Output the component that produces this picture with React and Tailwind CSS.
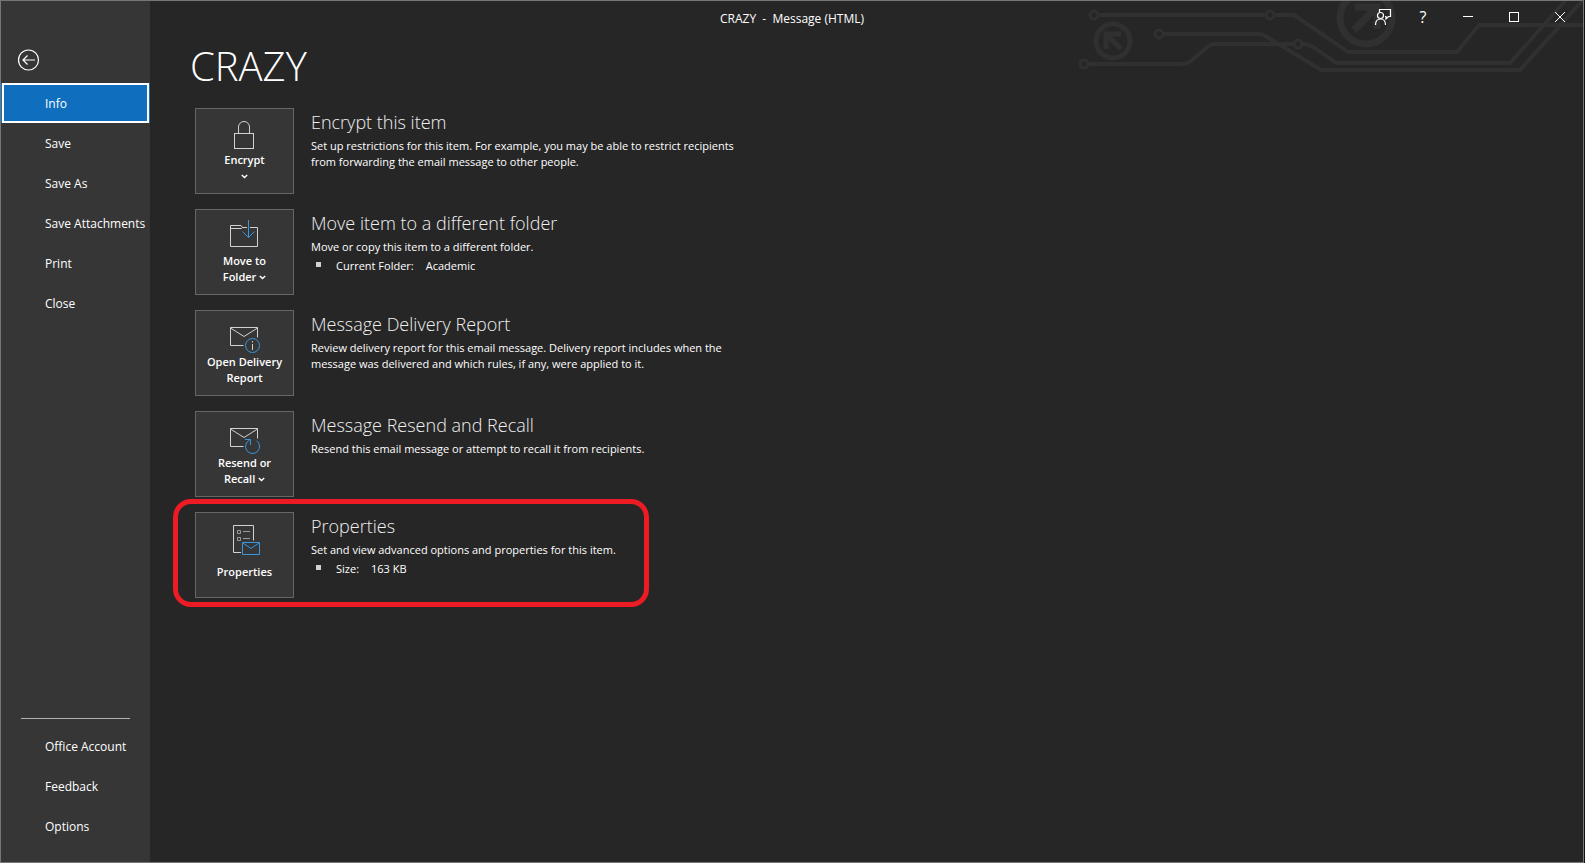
import React from 'react';

const primaryNav = ['Info', 'Save', 'Save As', 'Save Attachments', 'Print', 'Close'];
const secondaryNav = ['Office Account', 'Feedback', 'Options'];

const ActionIcon = ({ children }) => (
  <svg className="overflow-visible" width="31" height="34" viewBox="0 0 31 34" fill="none" stroke="#d2d2d2">
    {children}
  </svg>
);

const LockIcon = () => (
  <ActionIcon>
    <rect x="5.5" y="15.5" width="19" height="15" />
    <path d="M9.500 15V9a5.500 5.500 0 0 1 11 0V15" />
  </ActionIcon>
);

const FolderIcon = () => (
  <ActionIcon>
    <path d="M18 8.500H13.500L12 6.500H1.500V27.500H28.500V8.500H21M1.500 9.500H12.500L13.500 8.500" />
    <path d="M19.500 1v17.500M13.500 12.500l6 6 6-6" stroke="#3a96dd" />
  </ActionIcon>
);

const Envelope = () => (
  <path d="M14.500 25.500h-13v-18h27v10M1.500 8l13.500 8.500L28.500 8" />
);

const ReportIcon = () => (
  <ActionIcon>
    <Envelope />
    <circle cx="23.5" cy="25.5" r="7" stroke="#3a96dd" />
    <path d="M23.500 21v1.500M23.500 24v6" />
  </ActionIcon>
);

const RecallIcon = () => (
  <ActionIcon>
    <Envelope />
    <path d="M27.500 19.700a7 7 0 1 1-7-.5M16 18.500h5.500v5.500" stroke="#3a96dd" />
  </ActionIcon>
);

const PropertiesIcon = () => (
  <ActionIcon>
    <path d="M12 30.500H4.500v-27h20v15" />
    <path d="M8.500 8.500h3v3h-3zM8.500 15.500h3v3h-3zM14 9.500h7M14 16.500h7" stroke="#9a9a9a" />
    <path d="M13.500 20.500h17v12h-17zM14 21l8 5.500 8-5.500" stroke="#3a96dd" />
  </ActionIcon>
);

const Chevron = () => (
  <svg className="inline-block mb-0.5" width="7" height="5" viewBox="0 0 7 5" fill="none" stroke="#fff" strokeWidth="1.5">
    <path d="M.8 1l2.700 2.500L6.200 1" />
  </svg>
);

const actions = [
  {
    icon: <LockIcon />,
    label: <>Encrypt<br /><Chevron /></>,
    title: 'Encrypt this item',
    text: ['Set up restrictions for this item. For example, you may be able to restrict recipients', 'from forwarding the email message to other people.'],
  },
  {
    icon: <FolderIcon />,
    label: <>Move to<br />Folder <Chevron /></>,
    title: 'Move item to a different folder',
    text: ['Move or copy this item to a different folder.'],
    detail: ['Current Folder:', 'Academic'],
  },
  {
    icon: <ReportIcon />,
    label: <>Open Delivery<br />Report</>,
    title: 'Message Delivery Report',
    text: ['Review delivery report for this email message. Delivery report includes when the', 'message was delivered and which rules, if any, were applied to it.'],
  },
  {
    icon: <RecallIcon />,
    label: <>Resend or<br />Recall <Chevron /></>,
    title: 'Message Resend and Recall',
    text: ['Resend this email message or attempt to recall it from recipients.'],
  },
  {
    icon: <PropertiesIcon />,
    label: 'Properties',
    title: 'Properties',
    text: ['Set and view advanced options and properties for this item.'],
    detail: ['Size:', '163 KB'],
    highlighted: true,
  },
];

const CircuitArt = () => (
  <svg className="absolute top-0 right-0" width="521" height="80" viewBox="0 1 521 80" fill="none" stroke="#303030" strokeWidth="4">
    <circle cx="32" cy="15" r="4" strokeWidth="3" />
    <circle cx="208" cy="15" r="4" strokeWidth="3" />
    <circle cx="97" cy="34" r="4" strokeWidth="3" />
    <circle cx="22" cy="64" r="4" strokeWidth="3" />
    <circle cx="236" cy="44" r="4" strokeWidth="3" />
    <path d="M36 15h168M212 15h20l54 37h109l22-27h104" />
    <path d="M101 34h96q4 0 8 3l54 33h199l63-70" />
    <path d="M26 64h95q4 0 8-3l16-14q4-3 8-3h79M240 44q8 0 14 5l20 14h174l56-63" />
    <circle cx="51" cy="41" r="17" strokeWidth="5" />
    <path d="M59 34H44v15M45 35l14 14" strokeWidth="5" />
    <circle cx="304" cy="18" r="26" strokeWidth="7" />
    <path d="M293 7h22v22M314 8l-22 22" strokeWidth="7" />
  </svg>
);

const WindowControls = () => (
  <div className="flex items-center self-start justify-self-end">
    <button aria-label="Coming soon" className="flex w-11 h-8 items-center justify-center">
      <svg width="18" height="18" viewBox="0 0 18 18" fill="none" stroke="#fff" strokeWidth="1.2">
        <path d="M5.500 4V1.500h11v7h-2l-2.500 2.500v-2.500h-1" />
        <circle cx="6.500" cy="7.500" r="3" />
        <path d="M1.500 17c0-4 2-6 5-6s5 2 5 6" />
      </svg>
    </button>
    <button aria-label="Help" className="w-9 h-8 text-base leading-8">?</button>
    <button aria-label="Minimize" className="flex w-[46px] h-8 ml-1 items-center justify-center">
      <svg width="10" height="10" stroke="#fff"><path d="M0 4.500h10" /></svg>
    </button>
    <button aria-label="Maximize" className="flex w-[46px] h-8 items-center justify-center">
      <svg width="10" height="10" fill="none" stroke="#fff"><rect x=".5" y=".5" width="9" height="9" /></svg>
    </button>
    <button aria-label="Close" className="flex w-[46px] h-8 items-center justify-center">
      <svg width="10" height="10" stroke="#fff"><path d="M0 0l10 10M10 0L0 10" /></svg>
    </button>
  </div>
);

const NavItem = ({ label, active }) => (
  <a
    href="#"
    className={`flex items-center h-10 mx-px pt-0.5 pl-[41px] border-2 whitespace-nowrap ${
      active ? 'bg-[#106ebe] border-white shadow-[-1px_0_#106ebe,1px_0_#106ebe]' : 'border-transparent'
    }`}
  >
    {label}
  </a>
);

const ActionRow = ({ action }) => (
  <section className="relative flex items-start gap-[17px]">
    {action.highlighted && (
      <div className="absolute -top-[13px] -left-[22px] w-[476px] h-[108px] border-[5px] border-[#ed1c24] rounded-[18px] pointer-events-none" />
    )}
    <button className="flex flex-col items-center w-[99px] h-[86px] pt-[9px] shrink-0 bg-[#363636] border border-[#666] font-semibold leading-4">
      <span className="flex h-[34px] items-start justify-center">{action.icon}</span>
      <span className={action.highlighted ? 'mt-2' : ''}>{action.label}</span>
    </button>
    <div>
      <h2 className="mb-0.5 text-lg leading-7 font-light text-[#f0f0f0]">{action.title}</h2>
      {action.text.map((line) => (
        <p key={line}>{line}</p>
      ))}
      {action.detail && (
        <div className="flex items-center mt-[3px]">
          <span className="w-[5px] h-[5px] ml-[5px] mr-[15px] mb-1 bg-[#d2d2d2]" />
          <dl className="flex gap-3">
            <dt>{action.detail[0]}</dt>
            <dd>{action.detail[1]}</dd>
          </dl>
        </div>
      )}
    </div>
  </section>
);

export default function App() {
  return (
    <div className="flex min-h-screen pr-px bg-[#111] text-white text-xs leading-4 font-['Open_Sans','Noto_Sans',sans-serif]">
      <div className="flex flex-1 bg-[#262626] border border-[#767676]">
        <nav className="flex flex-col w-[149px] shrink-0 pb-4 bg-[#363636]">
          <button aria-label="Back" className="mt-12 ml-4 mb-3 w-6">
            <svg width="24" height="22" viewBox="0 0 24 22" fill="none" stroke="#fff" strokeWidth="1.2">
              <circle cx="11.500" cy="11" r="10" />
              <path d="M18 11H6M10.500 6.500L6 11l4.500 4.500" />
            </svg>
          </button>
          {primaryNav.map((label) => (
            <NavItem key={label} label={label} active={label === 'Info'} />
          ))}
          <hr className="mt-auto mb-[7px] mx-5 border-[#b0b0b0]" />
          {secondaryNav.map((label) => (
            <NavItem key={label} label={label} />
          ))}
        </nav>

        <main className="relative flex-1">
          <CircuitArt />
          {/* Starts at the window's left edge so the title is centred on the window */}
          <header className="relative grid grid-cols-[1fr_auto_1fr] h-9 -ml-[149px]">
            <div />
            <span className="leading-9 whitespace-pre">CRAZY  -  Message (HTML)</span>
            <WindowControls />
          </header>
          <div className="relative pl-[45px]">
            <h1 className="-ml-[5px] text-[40px] leading-[58px] mb-[13px] font-light">CRAZY</h1>
            <div className="flex flex-col gap-[15px] text-[11px]">
              {actions.map((action) => (
                <ActionRow key={action.title} action={action} />
              ))}
            </div>
          </div>
        </main>
      </div>
    </div>
  );
}
